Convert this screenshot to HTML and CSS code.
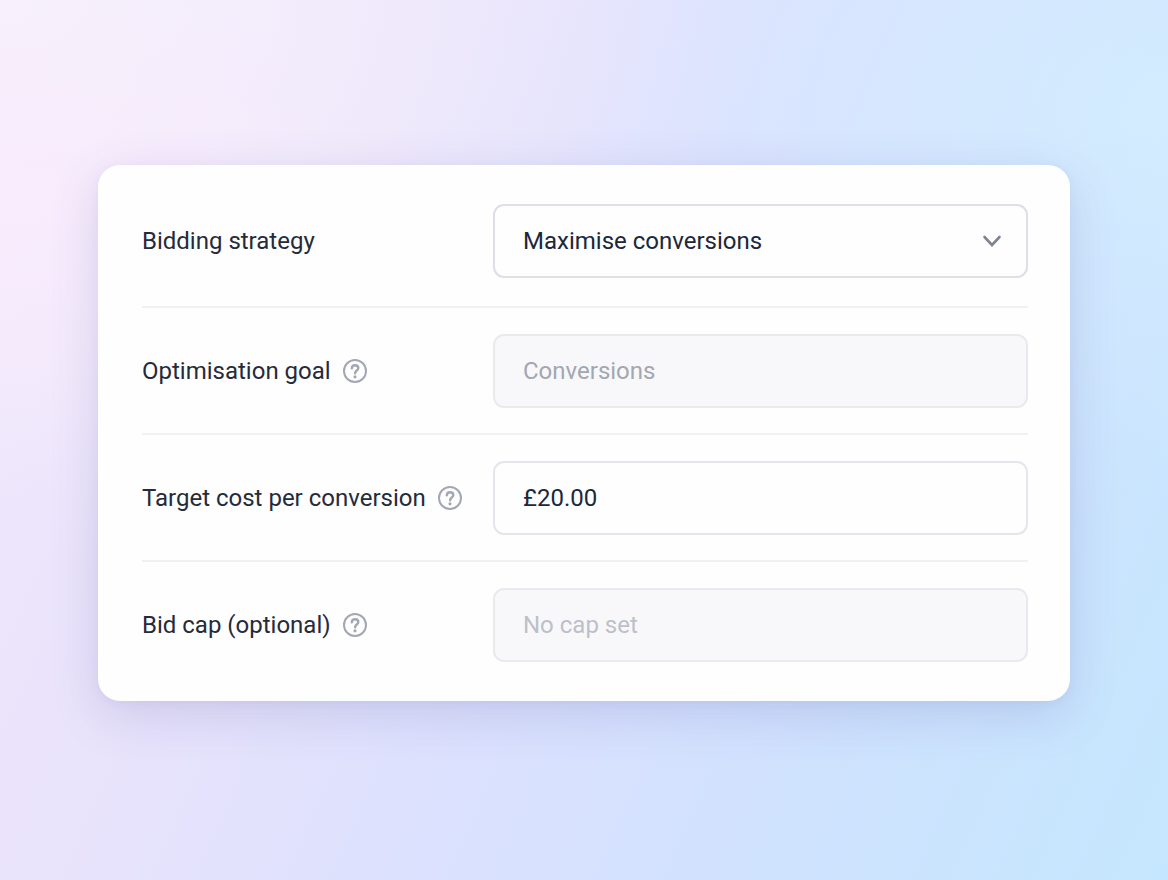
FILE: index.html
```html
<!DOCTYPE html>
<html lang="en-GB">
<head>
<meta charset="utf-8">
<meta name="viewport" content="width=device-width, initial-scale=1">
<title>Bidding settings</title>
<link rel="stylesheet" href="styles.css">
</head>
<body class="page">
<svg class="sprite" aria-hidden="true">
  <symbol id="help" viewBox="0 0 26 26">
    <circle cx="13" cy="13" r="11" fill="none" stroke="currentColor" stroke-width="2"/>
    <path d="M9.8 10.4C9.9 8.3 11.2 7.2 13 7.2C14.9 7.2 16.3 8.4 16.3 10.1C16.3 12.5 13.1 12.6 13.1 15.2" fill="none" stroke="currentColor" stroke-width="2.4" stroke-linecap="round"/>
    <circle cx="13" cy="18.8" r="1.6" fill="currentColor"/>
  </symbol>
</svg>
<form class="card">
  <div class="row row-lead">
    <div class="label-group"><label for="strategy">Bidding strategy</label></div>
    <div class="select-wrap">
      <select class="control select" id="strategy"><option>Maximise conversions</option></select>
      <svg class="chevron" viewBox="0 0 20 20" aria-hidden="true"><path d="M2.5 6L10 14L17.5 6" fill="none" stroke="currentColor" stroke-width="2.6" stroke-linecap="round" stroke-linejoin="miter"/></svg>
    </div>
  </div>
  <div class="row">
    <div class="label-group">
      <label for="goal">Optimisation goal</label>
      <button class="help" type="button" aria-label="About optimisation goal"><svg class="help-icon"><use href="#help"/></svg></button>
    </div>
    <input class="control" id="goal" type="text" value="Conversions" disabled>
  </div>
  <div class="row">
    <div class="label-group">
      <label for="target">Target cost per conversion</label>
      <button class="help" type="button" aria-label="About target cost"><svg class="help-icon"><use href="#help"/></svg></button>
    </div>
    <input class="control" id="target" type="text" value="£20.00">
  </div>
  <div class="row">
    <div class="label-group">
      <label for="cap">Bid cap (optional)</label>
      <button class="help" type="button" aria-label="About bid cap"><svg class="help-icon"><use href="#help"/></svg></button>
    </div>
    <input class="control" id="cap" type="text" placeholder="No cap set" disabled>
  </div>
</form>
</body>
</html>
```
FILE: styles.css
```css
* {
  box-sizing: border-box;
}

.page {
  margin: 0;
  min-height: 100vh;
  padding: 165px 98px 64px;
  font-family: Roboto, "Liberation Sans", sans-serif;
  font-size: 24px;
  line-height: 32px;
  color: #252b3b;
  background:
    radial-gradient(ellipse at 0% 24%, rgba(250, 235, 253, 0.7), rgba(250, 235, 253, 0) 28%),
    radial-gradient(ellipse at 0% 0%, rgba(248, 242, 252, 0.9), rgba(248, 242, 252, 0) 45%),
    radial-gradient(ellipse at 100% 12%, rgba(213, 240, 255, 0.7), rgba(213, 240, 255, 0) 36%),
    linear-gradient(114deg, #f0e7fb 0%, #e9e3fb 28%, #dce1fe 51%, #cfe2fe 74%, #c5e7fe 100%);
}

.sprite {
  position: absolute;
  width: 0;
  height: 0;
}

.card {
  padding: 13px 42px 14px 44px;
  border-radius: 22px;
  background: #fefefe;
  box-shadow: 0 14px 48px rgba(88, 88, 160, 0.19), 0 2px 10px rgba(88, 88, 160, 0.05);
}

.row {
  display: grid;
  grid-template-columns: minmax(0, 351fr) minmax(0, 535fr);
  align-items: center;
  padding: 26px 0 25px;
}

.row + .row {
  border-top: 2px solid #f0f1f4;
}

.row-lead {
  padding-bottom: 28px;
}

.label-group {
  display: flex;
  align-items: center;
  gap: 11px;
}

.help {
  display: flex;
  padding: 0;
  border: 0;
  background: none;
  color: #a3a7b4;
}

.help-icon {
  width: 26px;
  height: 26px;
}

.select-wrap {
  display: grid;
  align-items: center;
}

.select-wrap > * {
  grid-area: 1 / 1;
}

.control {
  appearance: none;
  width: 100%;
  height: 74px;
  margin: 0;
  padding: 0 28px;
  border: 2px solid #e5e6eb;
  border-radius: 11px;
  background: #fefefe;
  color: #20273a;
  font: inherit;
}

.select {
  border-color: #dedfe6;
}

.control:disabled {
  border-color: #e9eaee;
  background: #f8f8fa;
  color: #a3a7b1;
  opacity: 1;
}

.control::placeholder {
  color: #bdc0c9;
  opacity: 1;
}

.chevron {
  justify-self: end;
  width: 20px;
  height: 20px;
  margin-right: 26px;
  color: #7f8493;
  pointer-events: none;
}
```
